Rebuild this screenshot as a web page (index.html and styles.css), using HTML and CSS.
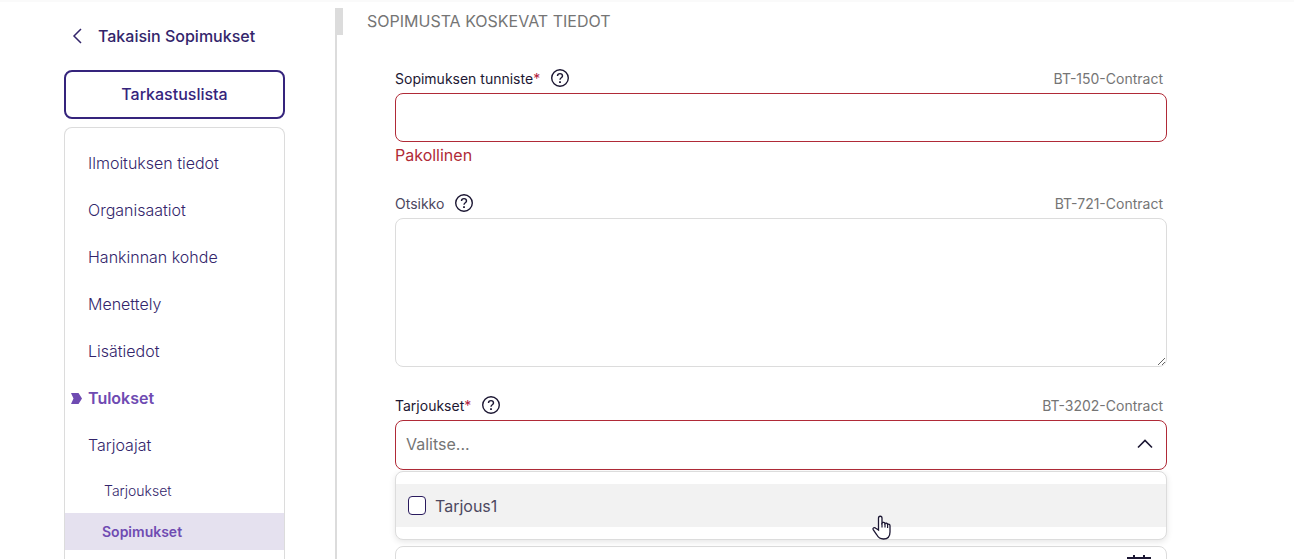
FILE: index.html
```html
<!DOCTYPE html>
<html lang="fi">
<head>
    <meta charset="UTF-8">
    <title>Sopimukset</title>
    <link rel="stylesheet" href="styles.css">
</head>
<body>
    <div class="page">
        <aside class="sidebar">
            <a class="back-link" href="#">
                <svg width="10" height="16" viewBox="0 0 10 16"><path d="M9 1 2 8l7 7" fill="none" stroke="currentColor" stroke-width="1.5"/></svg>
                Takaisin Sopimukset
            </a>
            <button class="checklist-btn" type="button">Tarkastuslista</button>
            <nav class="menu">
                <a href="#">Ilmoituksen tiedot</a>
                <a href="#">Organisaatiot</a>
                <a href="#">Hankinnan kohde</a>
                <a href="#">Menettely</a>
                <a href="#">Lisätiedot</a>
                <a class="active" href="#">
                    <svg width="11" height="11" viewBox="0 0 11 11"><path d="M0 0h7.500L11 5.500 7.500 11H0l2.500-5.500z" fill="currentColor"/></svg>
                    Tulokset
                </a>
                <a href="#">Tarjoajat</a>
                <a class="sub" href="#">Tarjoukset</a>
                <a class="sub current" href="#">Sopimukset</a>
            </nav>
        </aside>
        <main class="content">
            <h2>SOPIMUSTA KOSKEVAT TIEDOT</h2>
            <form class="fields">
                <div class="field">
                    <div class="label-row">
                        <label for="contractId">Sopimuksen tunniste<span class="required">*</span></label>
                        <button class="help" type="button" aria-label="Ohje">
                            <svg width="20" height="20" viewBox="0 0 20 20" fill="none" stroke="currentColor" stroke-width="1.400"><circle cx="10" cy="10" r="8.300"/><path d="M7.500 8c0-3.200 5-3.200 5 0 0 1.900-2.500 1.700-2.500 3.700"/><path d="M10 13.300v1.700" stroke-width="1.800"/></svg>
                        </button>
                        <span class="code">BT-150-Contract</span>
                    </div>
                    <input class="control invalid" id="contractId" type="text">
                    <p class="error">Pakollinen</p>
                </div>
                <div class="field">
                    <div class="label-row">
                        <label class="muted" for="title">Otsikko</label>
                        <button class="help" type="button" aria-label="Ohje">
                            <svg width="20" height="20" viewBox="0 0 20 20" fill="none" stroke="currentColor" stroke-width="1.400"><circle cx="10" cy="10" r="8.300"/><path d="M7.500 8c0-3.200 5-3.200 5 0 0 1.900-2.500 1.700-2.500 3.700"/><path d="M10 13.300v1.700" stroke-width="1.800"/></svg>
                        </button>
                        <span class="code">BT-721-Contract</span>
                    </div>
                    <textarea class="control" id="title"></textarea>
                </div>
                <div class="field">
                    <div class="label-row">
                        <label for="tenders">Tarjoukset<span class="required">*</span></label>
                        <button class="help" type="button" aria-label="Ohje">
                            <svg width="20" height="20" viewBox="0 0 20 20" fill="none" stroke="currentColor" stroke-width="1.400"><circle cx="10" cy="10" r="8.300"/><path d="M7.500 8c0-3.200 5-3.200 5 0 0 1.900-2.500 1.700-2.500 3.700"/><path d="M10 13.300v1.700" stroke-width="1.800"/></svg>
                        </button>
                        <span class="code">BT-3202-Contract</span>
                    </div>
                    <div class="select-wrap">
                        <select class="control invalid" id="tenders">
                            <option>Valitse...</option>
                        </select>
                        <svg class="chevron" width="16" height="10" viewBox="0 0 16 10"><path d="M1 8.500 8 1.500l7 7" fill="none" stroke="currentColor" stroke-width="1.600"/></svg>
                        <div class="dropdown">
                            <label class="option"><input type="checkbox"> Tarjous1</label>
                        </div>
                    </div>
                </div>
                <div class="field date-field">
                    <input class="control" type="text" aria-label="Päivämäärä">
                    <svg class="calendar" width="24" height="24" viewBox="0 0 24 24" fill="none" stroke="currentColor" stroke-width="2"><path d="M1 3h22v20H1zM7 0v6M17 0v6M1 9h22"/></svg>
                </div>
            </form>
        </main>
    </div>
    <svg class="pointer" width="20" height="26" viewBox="0 0 20 26"><path d="M6.500 15V3.200c0-2.600 3.500-2.600 3.500 0V8c.6-1 2.800-.8 3 .6.800-.8 2.500-.4 2.600.8 1-.6 2.400 0 2.400 1.400V17c0 4.500-2.500 7-6.500 7-3.200 0-5.200-1.300-6.700-4.200L1.200 14.600c-.8-1.800 1.300-2.600 2.600-1.400z" fill="#fff" stroke="#1c1733" stroke-width="1.300"/><path d="M10 8v4.500M13 8.500v4M15.600 9.400v3.600" stroke="#1c1733" stroke-width="1.200"/></svg>
</body>
</html>
```
FILE: styles.css
```css
* { box-sizing: border-box; }
body {
    margin: 0;
    height: 100vh;
    overflow: hidden;
    font-family: Inter, "Liberation Sans", sans-serif;
    font-size: 16px;
    color: #1c1733;
    background: #fff;
    border-top: 2px solid #fafafa;
}
a { color: inherit; text-decoration: none; }
.page {
    display: flex;
    gap: 50px;
    height: 100%;
    padding: 6px 127px 0 64px;
    overflow: hidden;
}
.sidebar {
    display: flex;
    flex-direction: column;
    flex: 0 0 221px;
    color: #33256b;
}
.back-link {
    display: flex;
    align-items: center;
    gap: 16px;
    padding: 16px 8px;
    line-height: 24px;
    font-weight: 500;
}
.checklist-btn {
    flex: none;
    height: 49px;
    margin: 6px 0 8px;
    padding: 0 0 2px;
    border: 2px solid #35247c;
    border-radius: 8px;
    background: #fff;
    color: #35247c;
    font: inherit;
    font-weight: 500;
}
.menu {
    display: flex;
    flex-direction: column;
    flex: 1;
    padding-top: 12px;
    border: 1px solid #dcdcdc;
    border-bottom: none;
    border-radius: 8px 8px 0 0;
    font-weight: 300;
}
.menu a {
    flex: none;
    padding-left: 23px;
    line-height: 47px;
}
.menu .active {
    display: flex;
    align-items: center;
    gap: 6px;
    padding-left: 6px;
    color: #6f4bb2;
    font-weight: 600;
}
.menu .sub {
    margin-top: 3px;
    padding-left: 39px;
    font-size: 14px;
    line-height: 37px;
}
.menu .current {
    margin-top: 4px;
    padding-left: 37px;
    background: #e5e1ef;
    color: #6f4bb2;
    font-weight: 600;
}
.content {
    flex: 1;
    min-width: 0;
    border-left: 2px solid #dcdcdc;
}
h2 {
    margin: 0;
    padding-left: 24px;
    border-left: 6px solid #dcdcdc;
    color: #757575;
    font-size: 16px;
    font-weight: 400;
    line-height: 27px;
}
.fields {
    display: flex;
    flex-direction: column;
    gap: 28px;
    padding: 33px 0 0 58px;
}
.label-row {
    display: flex;
    align-items: center;
    height: 20px;
    margin-bottom: 5px;
    padding-right: 4px;
    font-size: 14px;
}
.muted { color: #4c4860; }
.required { color: #b0203a; }
.help {
    display: flex;
    margin-left: 10px;
    padding: 0;
    border: none;
    background: none;
    color: #1c1733;
}
.code {
    margin-left: auto;
    color: #757575;
}
.control {
    display: block;
    width: 100%;
    height: 49px;
    padding: 0 10px 2px;
    border: 1px solid #dcdcdc;
    border-radius: 8px;
    background: #fff;
    color: #757575;
    font: inherit;
    outline: none;
}
textarea.control { height: 149px; padding: 10px; }
select.control { height: 50px; appearance: none; }
.control.invalid { border-color: #b02a37; }
.error {
    margin: 1px 0 0;
    color: #b02a37;
    line-height: 24px;
    height: 22px;
}
.select-wrap { position: relative; }
.chevron {
    position: absolute;
    top: 19px;
    right: 14px;
    pointer-events: none;
}
.dropdown {
    position: absolute;
    top: 51px;
    left: 0;
    right: 0;
    z-index: 1;
    padding: 12px 0;
    border: 1px solid #dcdcdc;
    border-radius: 8px;
    background: #fff;
    box-shadow: 0 2px 6px rgba(0,0,0,0.10);
}
.option {
    display: flex;
    align-items: center;
    gap: 9px;
    height: 43px;
    padding-left: 12px;
    background: #f2f2f2;
    color: #4c4860;
}
.option input {
    appearance: none;
    width: 18px;
    height: 19px;
    margin: 0;
    border: 1px solid #2a1b5e;
    border-radius: 4px;
    background: #fff;
}
.date-field {
    position: relative;
    margin-top: 48px;
}
.calendar {
    position: absolute;
    top: 9px;
    right: 16px;
}
.pointer {
    position: absolute;
    top: 515px;
    left: 872px;
    z-index: 2;
}
```
